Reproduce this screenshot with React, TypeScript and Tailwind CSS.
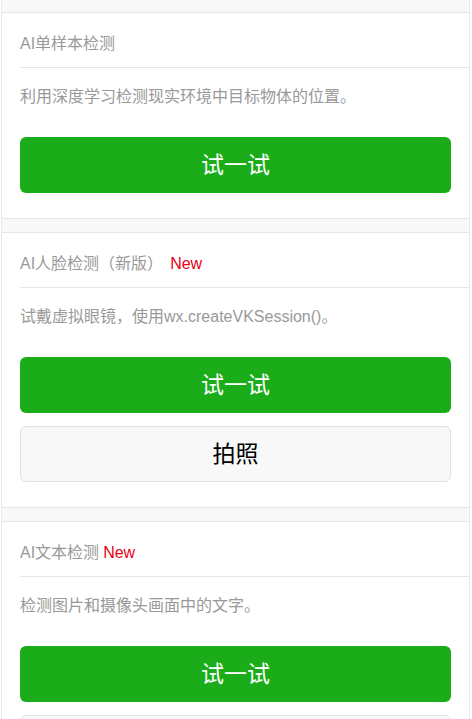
const FONT = { fontFamily: '"Liberation Sans", "Noto Sans CJK SC", sans-serif' };

type Demo = {
  title: string;
  badge?: string;
  badgeGap?: boolean;
  desc: string;
  photo?: boolean;
};

const demos: Demo[] = [
  { title: "AI单样本检测", desc: "利用深度学习检测现实环境中目标物体的位置。" },
  {
    title: "AI人脸检测（新版）",
    badge: "New",
    badgeGap: true,
    desc: "试戴虚拟眼镜，使用wx.createVKSession()。",
    photo: true,
  },
  { title: "AI文本检测", badge: "New", desc: "检测图片和摄像头画面中的文字。", photo: true },
];

function DemoCard({ demo }: { demo: Demo }) {
  return (
    <section className="border-y border-[#e6e6e6] bg-white pl-[18px]">
      <div className="border-b border-[#e6e6e6] pt-[19px] pb-[12px] text-[16px] leading-[23px] text-[#999]">
        {demo.title}
        {demo.badge && (
          <span className={demo.badgeGap ? "ml-[7px] text-[#e60012]" : "ml-[4px] text-[#e60012]"}>
            {demo.badge}
          </span>
        )}
      </div>
      <div className="pr-[18px] pb-[25px]">
        <p className="pt-[17px] text-[16px] leading-[24px] text-[#999]">{demo.desc}</p>
        <button className="mt-[28px] flex h-[56px] w-full items-center justify-center rounded-[6px] bg-[#1aad19] text-[23px] text-white">
          试一试
        </button>
        {demo.photo && (
          <button className="mt-[13px] flex h-[56px] w-full items-center justify-center rounded-[6px] border border-[#e2e2e2] bg-[#f8f8f8] text-[23px] text-black">
            拍照
          </button>
        )}
      </div>
    </section>
  );
}

export default function App() {
  return (
    <div className="h-[719px] w-[472px] overflow-hidden bg-white" style={FONT}>
      <div className="ml-px flex w-[469px] flex-col gap-[13px] border-x border-[#eaeaea] bg-[#f8f8f8] pt-[12px] pb-[20px]">
        {demos.map((d) => (
          <DemoCard key={d.title} demo={d} />
        ))}
      </div>
    </div>
  );
}
